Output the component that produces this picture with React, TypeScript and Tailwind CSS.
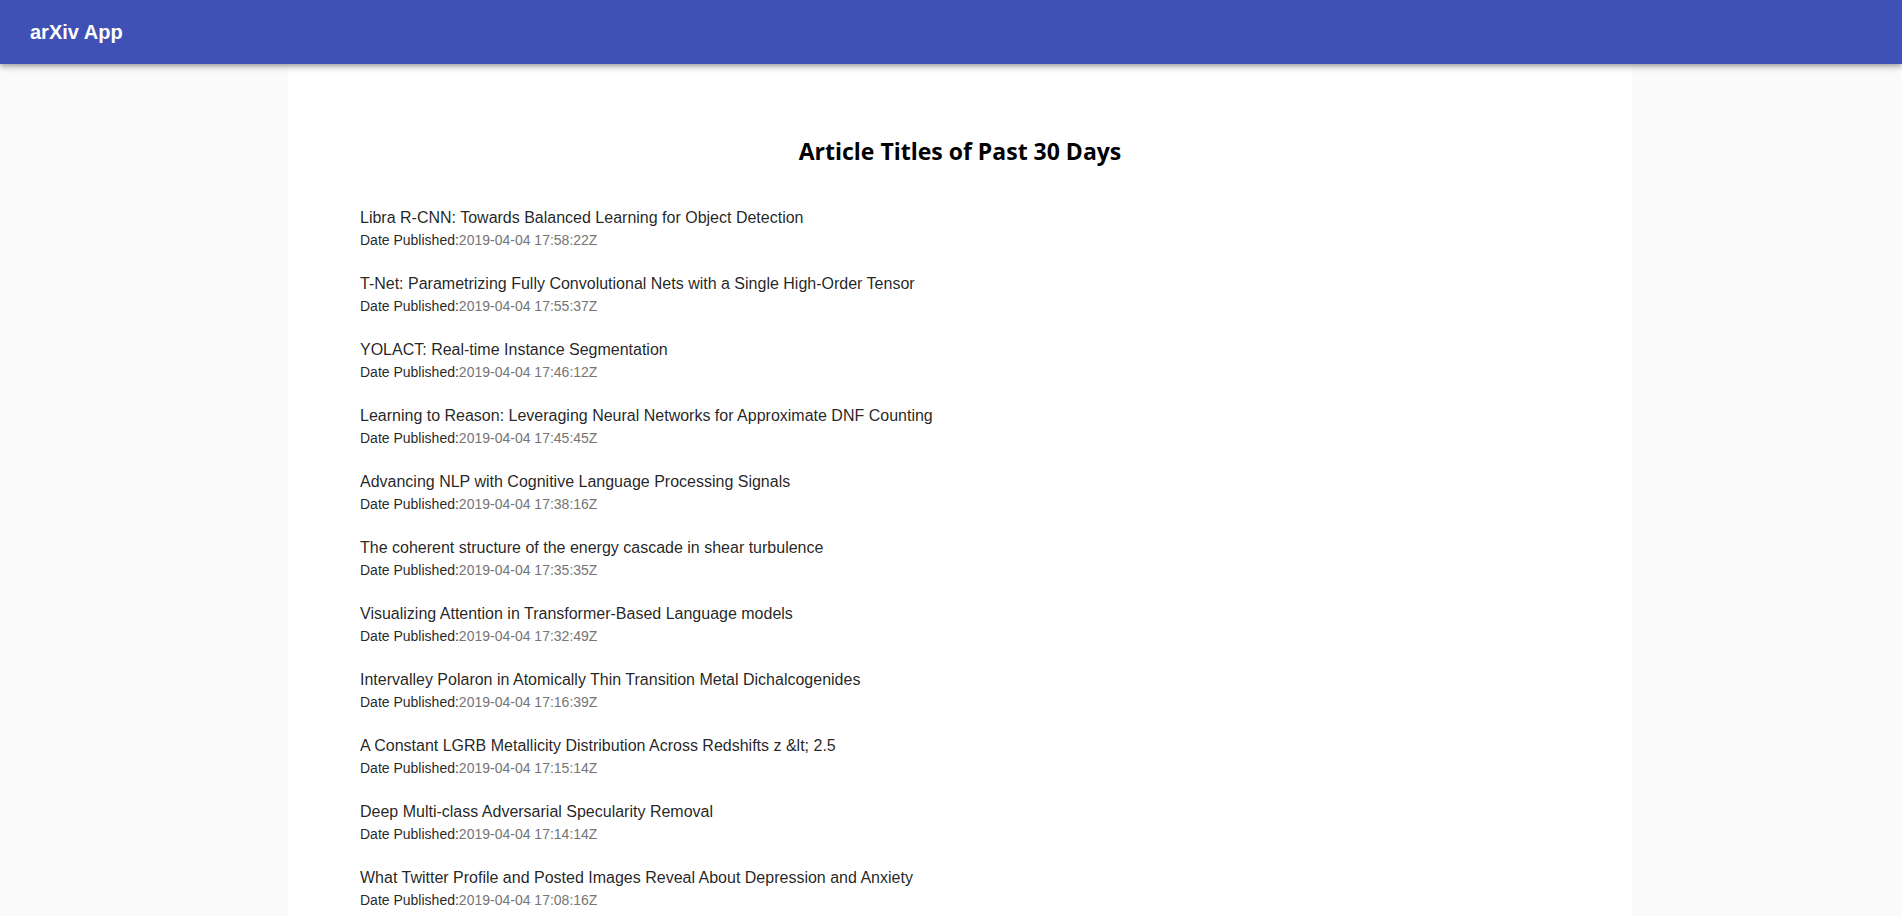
import React from "react";

const articles: { title: string; date: string }[] = [
  { title: "Libra R-CNN: Towards Balanced Learning for Object Detection", date: "2019-04-04 17:58:22Z" },
  { title: "T-Net: Parametrizing Fully Convolutional Nets with a Single High-Order Tensor", date: "2019-04-04 17:55:37Z" },
  { title: "YOLACT: Real-time Instance Segmentation", date: "2019-04-04 17:46:12Z" },
  { title: "Learning to Reason: Leveraging Neural Networks for Approximate DNF Counting", date: "2019-04-04 17:45:45Z" },
  { title: "Advancing NLP with Cognitive Language Processing Signals", date: "2019-04-04 17:38:16Z" },
  { title: "The coherent structure of the energy cascade in shear turbulence", date: "2019-04-04 17:35:35Z" },
  { title: "Visualizing Attention in Transformer-Based Language models", date: "2019-04-04 17:32:49Z" },
  { title: "Intervalley Polaron in Atomically Thin Transition Metal Dichalcogenides", date: "2019-04-04 17:16:39Z" },
  { title: "A Constant LGRB Metallicity Distribution Across Redshifts z &lt; 2.5", date: "2019-04-04 17:15:14Z" },
  { title: "Deep Multi-class Adversarial Specularity Removal", date: "2019-04-04 17:14:14Z" },
  { title: "What Twitter Profile and Posted Images Reveal About Depression and Anxiety", date: "2019-04-04 17:08:16Z" },
];

export default function App() {
  return (
    <div className="min-h-screen bg-[#fafafa] font-['Liberation_Sans',Arial,sans-serif]">
      <header className="relative z-10 flex h-16 items-center bg-[#3f51b5] pl-[30px] shadow-[0px_2px_4px_-1px_rgba(0,0,0,0.2),0px_4px_5px_0px_rgba(0,0,0,0.14),0px_1px_10px_0px_rgba(0,0,0,0.12)]">
        <h1 className="text-[20px] font-bold leading-8 text-white">arXiv App</h1>
      </header>
      <main className="ml-[288px] min-h-[852px] w-[1344px] bg-white pt-[71px]">
        <h2 className="text-center font-['Open_Sans',sans-serif] text-[23px] font-bold leading-8 text-black">
          Article Titles of Past 30 Days
        </h2>
        <ul className="mt-[28px] pl-[72px]">
          {articles.map((a) => (
            <li key={a.title} className="py-[11px]">
              <div className="text-[16px] leading-6 text-[rgba(0,0,0,0.87)]">{a.title}</div>
              <div className="text-[14px] leading-5 text-[#757575]">
                <span className="text-[rgba(0,0,0,0.87)]">Date Published:</span>
                {a.date}
              </div>
            </li>
          ))}
        </ul>
      </main>
    </div>
  );
}
